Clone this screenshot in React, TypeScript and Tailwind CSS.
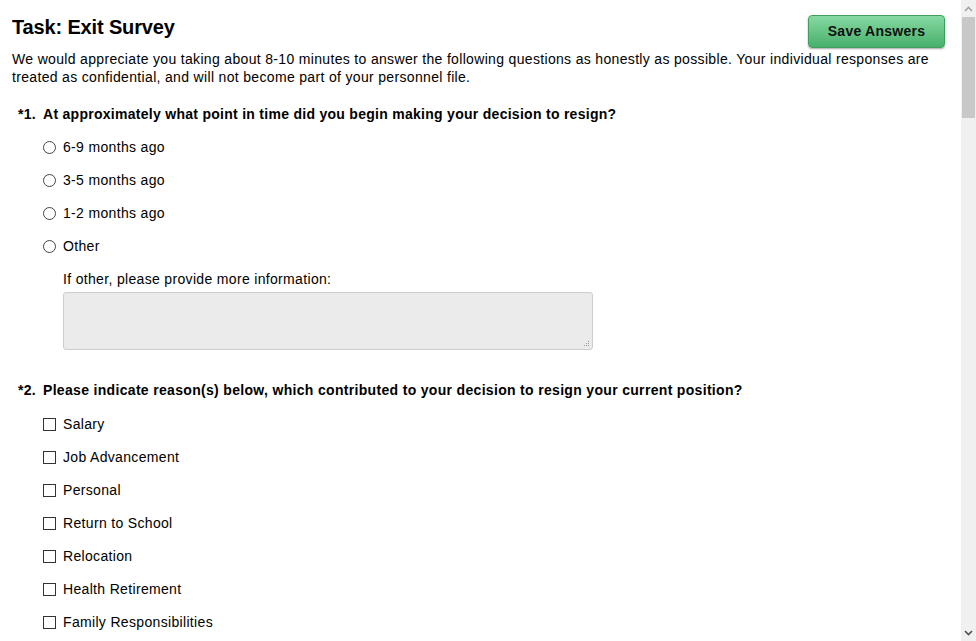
import React from "react";

const timing = ["6-9 months ago", "3-5 months ago", "1-2 months ago", "Other"];

const reasons = [
  "Salary",
  "Job Advancement",
  "Personal",
  "Return to School",
  "Relocation",
  "Health Retirement",
  "Family Responsibilities",
];

function Radio({ label }: { label: string }) {
  return (
    <label className="flex h-[33px] items-center">
      <span className="ml-[31px] h-[13px] w-[13px] rounded-full border border-[#444] bg-white" />
      <span className="ml-[7px]">{label}</span>
    </label>
  );
}

function Check({ label }: { label: string }) {
  return (
    <label className="flex h-[33px] shrink-0 items-center">
      <span className="ml-[31px] h-[13px] w-[13px] border border-[#333] bg-white" />
      <span className="ml-[7px]">{label}</span>
    </label>
  );
}

function Scrollbar() {
  return (
    <div className="flex h-full w-[15px] shrink-0 flex-col bg-[#f0f0f0]">
      <div className="flex h-[17px] items-center justify-center">
        <svg width="9" height="6" viewBox="0 0 9 6">
          <path d="M1 5 L4.5 1.5 L8 5" fill="none" stroke="#a3a3a3" strokeWidth="1.6" />
        </svg>
      </div>
      <div className="mx-[1px] h-[101px] bg-[#c8c8c8]" />
      <div className="flex-1" />
      <div className="flex h-[17px] items-center justify-center">
        <svg width="9" height="6" viewBox="0 0 9 6">
          <path d="M1 1 L4.5 4.5 L8 1" fill="none" stroke="#505050" strokeWidth="1.6" />
        </svg>
      </div>
    </div>
  );
}

export default function App() {
  return (
    <div
      className="flex h-[641px] w-[976px] overflow-hidden bg-white text-[14px] tracking-[0.33px] text-black"
      style={{ fontFamily: '"Liberation Sans", Arial, sans-serif' }}
    >
      <div className="flex min-w-0 flex-1 flex-col overflow-hidden pl-[12px] pr-[16px]">
        <div className="flex items-start justify-between pt-[15px]">
          <h1 className="text-[20px] font-bold leading-[24px] tracking-[-0.15px]">Task: Exit Survey</h1>
          <button className="h-[33px] w-[137px] rounded-[4px] border border-[#3f9e60] bg-gradient-to-b from-[#86d9a2] to-[#46b06b] text-[14px] font-bold tracking-[0.25px] text-[#111] shadow-[0_1px_2px_rgba(0,0,0,0.35)]">
            Save Answers
          </button>
        </div>

        <p className="mt-[2px] max-w-[920px] leading-[18px]">
          We would appreciate you taking about 8-10 minutes to answer the following questions as
          honestly as possible. Your individual responses are treated as confidential, and will not
          become part of your personnel file.
        </p>

        <div className="mt-[19px] flex font-bold leading-[18px] tracking-[0.28px]">
          <span className="ml-[6px] w-[25px]">*1.</span>
          <span>At approximately what point in time did you begin making your decision to resign?</span>
        </div>

        <div className="mt-[8px] flex flex-col">
          {timing.map((t) => (
            <Radio key={t} label={t} />
          ))}
        </div>

        <div className="ml-[51px] mt-[7px] leading-[18px]">If other, please provide more information:</div>
        <div className="relative ml-[51px] mt-[4px] h-[58px] w-[530px] shrink-0 rounded-[3px] border border-[#cdcdcd] bg-[#ebebeb]">
          <svg className="absolute bottom-[2px] right-[2px]" width="7" height="7" viewBox="0 0 7 7">
            <rect x="5" y="1" width="1" height="1" fill="#9a9a9a" />
            <rect x="3" y="3" width="1" height="1" fill="#9a9a9a" />
            <rect x="5" y="3" width="1" height="1" fill="#9a9a9a" />
            <rect x="1" y="5" width="1" height="1" fill="#9a9a9a" />
            <rect x="3" y="5" width="1" height="1" fill="#9a9a9a" />
            <rect x="5" y="5" width="1" height="1" fill="#9a9a9a" />
          </svg>
        </div>

        <div className="mt-[31px] flex shrink-0 font-bold leading-[18px] tracking-[0.32px]">
          <span className="ml-[6px] w-[25px]">*2.</span>
          <span>Please indicate reason(s) below, which contributed to your decision to resign your current position?</span>
        </div>

        <div className="mt-[9px] flex flex-col">
          {reasons.map((r) => (
            <Check key={r} label={r} />
          ))}
        </div>
      </div>
      <Scrollbar />
    </div>
  );
}
